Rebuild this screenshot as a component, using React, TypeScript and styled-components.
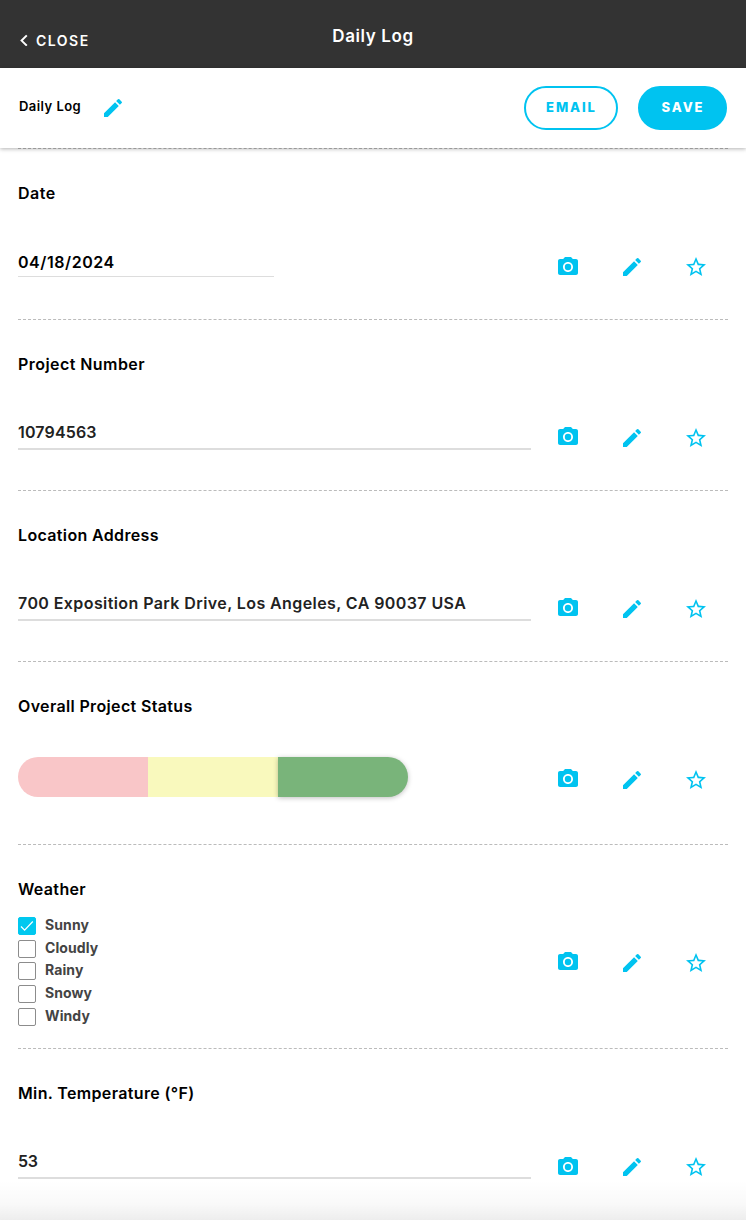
import React from "react";
import styled, { createGlobalStyle } from "styled-components";
import { MdCameraAlt, MdEdit, MdStarBorder } from "react-icons/md";

const CYAN = "#00c3f0";

const GlobalStyle = createGlobalStyle`
  *, *::before, *::after { box-sizing: border-box; }
  body {
    margin: 0;
    background: #fff;
    color: #000;
    font-family: Inter, "Liberation Sans", sans-serif;
    -webkit-font-smoothing: antialiased;
  }
  button { font-family: inherit; cursor: pointer; }
`;

const Page = styled.div`
  position: relative;
  width: 100%;
  height: 1220px;
  overflow: hidden;
`;

const Header = styled.header`
  display: grid;
  grid-template-columns: 1fr auto 1fr;
  align-items: start;
  height: 68px;
  padding: 0 20px;
  background: #333;
  color: #fff;
`;

const CloseButton = styled.button`
  display: flex;
  align-items: center;
  gap: 8px;
  height: 20px;
  margin-top: 30px;
  padding: 0;
  border: 0;
  background: none;
  color: inherit;
  font-size: 14px;
  font-weight: 600;
  letter-spacing: 1.5px;
`;

const HeaderTitle = styled.h1`
  margin: 26px 0 0;
  font-size: 17px;
  line-height: 20px;
  font-weight: 600;
  letter-spacing: 0.6px;
`;

const Toolbar = styled.div`
  position: relative;
  z-index: 1;
  display: flex;
  align-items: center;
  height: 80px;
  padding: 0 19px;
  background: #fff;
  box-shadow: 0 1px 4px rgba(0, 0, 0, 0.3);
`;

const LogName = styled.span`
  margin: -5px 20px 0 0;
  font-size: 13px;
  line-height: 18px;
  font-weight: 600;
  letter-spacing: 0.45px;
`;

const PillButton = styled.button<{ $filled?: boolean; $width: number }>`
  width: ${(p) => p.$width}px;
  height: 44px;
  margin-left: ${(p) => (p.$filled ? "20px" : "auto")};
  padding: 0 0 2px;
  border: 2px solid ${CYAN};
  border-radius: 22px;
  background: ${(p) => (p.$filled ? CYAN : "#fff")};
  color: ${(p) => (p.$filled ? "#fff" : CYAN)};
  font-size: 13px;
  font-weight: 800;
  letter-spacing: 1.9px;
  text-indent: 1px;
`;

const Section = styled.section<{ $height: number }>`
  display: flex;
  justify-content: space-between;
  height: ${(p) => p.$height}px;
  margin: 0 18px;
  border-top: 1px dashed #bbb;
`;

const Body = styled.div`
  width: 513px;
  padding-top: 34px;
`;

const Label = styled.h2<{ $track: number }>`
  margin: 0;
  font-size: 16px;
  line-height: 20px;
  font-weight: 600;
  letter-spacing: ${(p) => p.$track}px;
`;

const DateValue = styled.div`
  width: 256px;
  height: 26px;
  margin-top: 48px;
  border-bottom: 1px solid #ddd;
  font-size: 16px;
  line-height: 22px;
  font-weight: 600;
  letter-spacing: 0.55px;
`;

const TextValue = styled.div<{ $track: number }>`
  height: 29px;
  margin-top: 47px;
  border-bottom: 2px solid #ddd;
  color: #222;
  font-size: 16px;
  line-height: 22px;
  font-weight: 600;
  letter-spacing: ${(p) => p.$track}px;
`;

const Actions = styled.div<{ $raised?: boolean }>`
  display: flex;
  gap: 40px;
  margin: 106px 20px 0 0;
  height: 24px;
  color: ${CYAN};
  & > svg:first-child { margin-top: ${(p) => (p.$raised ? "-1px" : "0")}; }
`;

const StatusBar = styled.div`
  display: flex;
  width: 390px;
  height: 40px;
  margin-top: 41px;
`;

const StatusSegment = styled.div<{ $color: string; $selected?: boolean }>`
  flex: 1;
  background: ${(p) => p.$color};
  box-shadow: ${(p) => (p.$selected ? "0 1px 5px rgba(0, 0, 0, 0.25)" : "none")};
  &:first-child { border-radius: 20px 0 0 20px; }
  &:last-child { border-radius: 0 20px 20px 0; }
`;

const CheckList = styled.div`
  margin-top: 17px;
`;

const CheckRow = styled.label`
  display: flex;
  align-items: flex-start;
  gap: 9px;
  height: 22.7px;
  color: #444;
  font-size: 14px;
  line-height: 18px;
  font-weight: 700;
  letter-spacing: 0.1px;
`;

const Box = styled.span<{ $on?: boolean }>`
  display: flex;
  align-items: center;
  justify-content: center;
  width: 18px;
  height: 18px;
  margin-top: 1px;
  border: 1px solid ${(p) => (p.$on ? "#00c8ef" : "#8c8c8c")};
  border-radius: 2px;
  background: ${(p) => (p.$on ? "#00c8ef" : "#fff")};
`;

const BottomFade = styled.div`
  position: absolute;
  left: 0;
  right: 0;
  bottom: 0;
  height: 40px;
  background: linear-gradient(rgba(0, 0, 0, 0), rgba(0, 0, 0, 0.025) 60%, rgba(0, 0, 0, 0.07));
`;

function RowActions({ raised }: { raised?: boolean }) {
  return (
    <Actions $raised={raised}>
      <MdCameraAlt size={24} />
      <MdEdit size={24} />
      <MdStarBorder size={24} />
    </Actions>
  );
}

interface FieldProps {
  label: string;
  height: number;
  track?: number;
  raised?: boolean;
  children: React.ReactNode;
}

function Field({ label, height, track = 0.35, raised, children }: FieldProps) {
  return (
    <Section $height={height}>
      <Body>
        <Label $track={track}>{label}</Label>
        {children}
      </Body>
      <RowActions raised={raised} />
    </Section>
  );
}

const weather = ["Sunny", "Cloudly", "Rainy", "Snowy", "Windy"];

export default function App() {
  return (
    <Page>
      <GlobalStyle />
      <Header>
        <CloseButton>
          <svg width="8" height="12" viewBox="0 0 8 12" fill="none" stroke="#fff" strokeWidth="2">
            <path d="M6.8 1.4L1.6 6.6l5.2 5" />
          </svg>
          CLOSE
        </CloseButton>
        <HeaderTitle>Daily Log</HeaderTitle>
      </Header>
      <Toolbar>
        <LogName>Daily Log</LogName>
        <MdEdit size={24} color={CYAN} />
        <PillButton $width={94}>EMAIL</PillButton>
        <PillButton $width={89} $filled>SAVE</PillButton>
      </Toolbar>
      <Field label="Date" height={171} track={0.5}>
        <DateValue>04/18/2024</DateValue>
      </Field>
      <Field label="Project Number" height={171} track={0.44} raised>
        <TextValue $track={0.15}>10794563</TextValue>
      </Field>
      <Field label="Location Address" height={171} raised>
        <TextValue $track={0.41}>700 Exposition Park Drive, Los Angeles, CA 90037 USA</TextValue>
      </Field>
      <Field label="Overall Project Status" height={183} raised>
        <StatusBar>
          <StatusSegment $color="#f9c6c8" />
          <StatusSegment $color="#f9f9bd" />
          <StatusSegment $color="#79b47a" $selected />
        </StatusBar>
      </Field>
      <Field label="Weather" height={204} raised>
        <CheckList>
          {weather.map((name, i) => (
            <CheckRow key={name}>
              <Box $on={i === 0}>
                {i === 0 && (
                  <svg width="14" height="12" viewBox="0 0 14 12" fill="none" stroke="#fff" strokeWidth="1.2">
                    <path d="M1 6.5l3.6 3.7L12.8 1.5" />
                  </svg>
                )}
              </Box>
              {name}
            </CheckRow>
          ))}
        </CheckList>
      </Field>
      <Field label="Min. Temperature (°F)" height={172}>
        <TextValue $track={-0.3}>53</TextValue>
      </Field>
      <BottomFade />
    </Page>
  );
}
